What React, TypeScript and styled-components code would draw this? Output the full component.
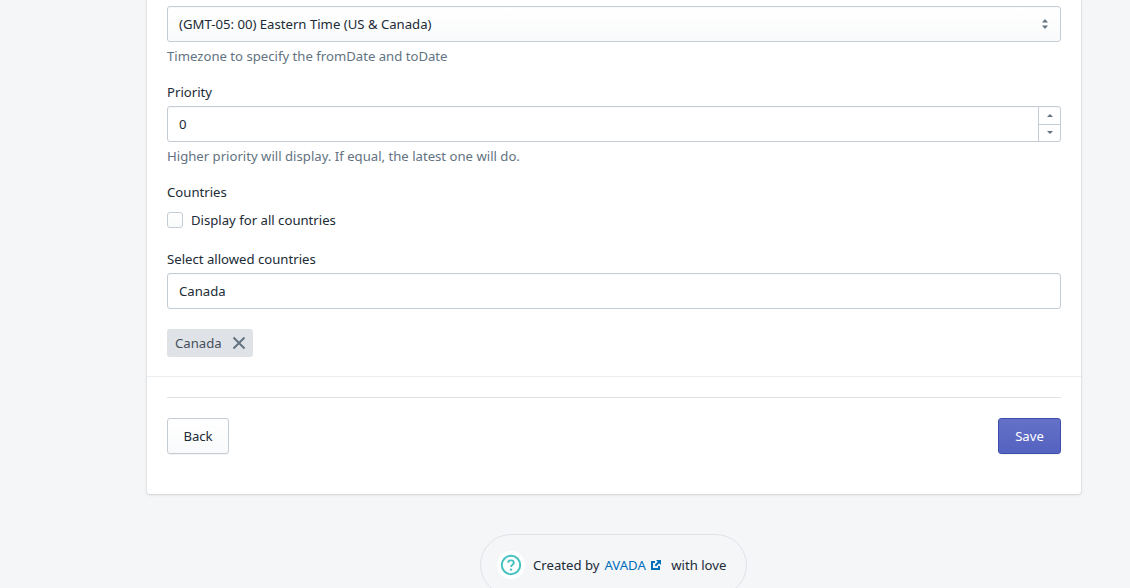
import React from "react";
import styled, { createGlobalStyle } from "styled-components";

const GlobalStyle = createGlobalStyle`
  html, body {
    margin: 0;
    height: 588px;
    overflow: hidden;
    background: #f4f6f8;
    font-family: "Noto Sans", "Open Sans", sans-serif;
    font-size: 13.15px;
    color: #212b36;
  }
  * { box-sizing: border-box; }
`;

const Page = styled.div`
  width: 1130px;
  padding: 0 49px 0 147px;
`;

const Card = styled.div`
  background: #fff;
  border-radius: 0 0 3px 3px;
  box-shadow: 0 0 0 1px rgba(63, 63, 68, 0.05), 0 1px 3px 0 rgba(63, 63, 68, 0.15);
`;

const FormSection = styled.div`
  padding: 6px 20px 19px;
  border-bottom: 1px solid #ebeef0;
`;

const ActionSection = styled.div`
  padding: 20px 20px 40px;
`;

const Field = styled.div<{ $gap?: number }>`
  margin-bottom: ${(p) => p.$gap ?? 0}px;
`;

const Label = styled.div`
  height: 20px;
  line-height: 20px;
  margin-bottom: 4px;
`;

const InputBox = styled.div`
  position: relative;
  height: 36px;
  display: flex;
  align-items: center;
  padding-left: 11px;
  border: 1px solid #c4cdd5;
  border-radius: 3px;
  background: #fff;
  box-shadow: inset 0 1px 0 0 rgba(99, 115, 129, 0.05);
`;

const SelectBox = styled(InputBox)`
  background: linear-gradient(180deg, #fff, #f9fafb);
  justify-content: space-between;
  padding-right: 11px;
`;

const Help = styled.div`
  color: #637381;
  height: 20px;
  line-height: 20px;
  margin-top: 4px;
`;

const Stepper = styled.div`
  position: absolute;
  top: 0;
  right: 0;
  bottom: 0;
  width: 22px;
  display: flex;
  flex-direction: column;
  border-left: 1px solid #c4cdd5;
`;

const StepButton = styled.div<{ $down?: boolean }>`
  flex: 1;
  display: flex;
  align-items: center;
  justify-content: center;
  border-top: ${(p) => (p.$down ? "1px solid #c4cdd5" : "none")};
`;

const CheckRow = styled.div`
  display: flex;
  align-items: center;
  gap: 8px;
  height: 20px;
  margin-top: 8px;
`;

const CheckBox = styled.div`
  width: 16px;
  height: 16px;
  border: 1px solid #c4cdd5;
  border-radius: 3px;
  background: linear-gradient(180deg, #fff, #f9fafb);
`;

const Tag = styled.div`
  display: inline-flex;
  align-items: center;
  height: 28px;
  margin-top: 20px;
  padding: 0 7px 0 8px;
  gap: 10px;
  background: #dfe3e8;
  border-radius: 3px;
  color: #454f5b;
`;

const Divider = styled.hr`
  margin: 0 0 20px;
  border: none;
  border-top: 1px solid #dfe3e8;
`;

const Actions = styled.div`
  display: flex;
  justify-content: space-between;
`;

const Button = styled.div<{ $primary?: boolean }>`
  height: 36px;
  display: flex;
  align-items: center;
  justify-content: center;
  width: ${(p) => (p.$primary ? "63px" : "62px")};
  border-radius: 3px;
  border: 1px solid ${(p) => (p.$primary ? "#3f4eae" : "#c4cdd5")};
  background: ${(p) =>
    p.$primary ? "linear-gradient(180deg, #6371c7, #5563c1)" : "linear-gradient(180deg, #fff, #f9fafb)"};
  color: ${(p) => (p.$primary ? "#fff" : "#212b36")};
  box-shadow: 0 1px 0 0 rgba(22, 29, 37, 0.05);
`;

const Footer = styled.div`
  display: flex;
  justify-content: center;
  margin-top: 40px;
  padding-right: 1px;
`;

const Pill = styled.div`
  display: flex;
  align-items: center;
  width: 267px;
  height: 62px;
  padding: 0 0 0 16px;
  border: 1px solid #dfe3e8;
  border-radius: 31px;
`;

const HelpIcon = styled.div`
  width: 28px;
  height: 28px;
  border-radius: 50%;
  background: #fff;
  display: flex;
  align-items: center;
  justify-content: center;
  margin-right: 8px;
`;

const Link = styled.a`
  color: #006fbb;
  margin: 0 6px 0 5px;
  display: inline-flex;
  align-items: center;
  gap: 4px;
`;

const Caret = ({ up }: { up?: boolean }) => (
  <svg width="8" height="4" viewBox="0 0 8 4" style={{ display: "block" }}>
    <path d={up ? "M1 4 L4 1 L7 4 Z" : "M1 0 L4 3 L7 0 Z"} fill="#637381" />
  </svg>
);

export default function App() {
  return (
    <Page>
      <GlobalStyle />
      <Card>
        <FormSection>
          <Field $gap={16}>
            <SelectBox>
              <span>(GMT-05: 00) Eastern Time (US &amp; Canada)</span>
              <svg width="8" height="12" viewBox="0 0 8 12">
                <path d="M1 4.5 L4 1 L7 4.5 Z M1 7.5 L4 11 L7 7.5 Z" fill="#637381" />
              </svg>
            </SelectBox>
            <Help>Timezone to specify the fromDate and toDate</Help>
          </Field>
          <Field $gap={16}>
            <Label>Priority</Label>
            <InputBox>
              0
              <Stepper>
                <StepButton>
                  <Caret up />
                </StepButton>
                <StepButton $down>
                  <Caret />
                </StepButton>
              </Stepper>
            </InputBox>
            <Help>Higher priority will display. If equal, the latest one will do.</Help>
          </Field>
          <Field $gap={19}>
            <Label>Countries</Label>
            <CheckRow>
              <CheckBox />
              Display for all countries
            </CheckRow>
          </Field>
          <Field>
            <Label>Select allowed countries</Label>
            <InputBox>Canada</InputBox>
          </Field>
          <Tag>
            Canada
            <svg width="14" height="14" viewBox="0 0 14 14">
              <path d="M1.5 1.5 L12.5 12.5 M12.5 1.5 L1.5 12.5" stroke="#637381" strokeWidth="2" />
            </svg>
          </Tag>
        </FormSection>
        <ActionSection>
          <Divider />
          <Actions>
            <Button>Back</Button>
            <Button $primary>Save</Button>
          </Actions>
        </ActionSection>
      </Card>
      <Footer>
        <Pill>
          <HelpIcon>
            <svg width="22" height="22" viewBox="0 0 22 22">
              <circle cx="11" cy="11" r="9.2" fill="none" stroke="#47c1bf" strokeWidth="2" />
              <path d="M8.2 8.8 C8.2 5.6 13.8 5.6 13.8 8.8 C13.8 10.8 11 10.6 11 13" fill="none" stroke="#47c1bf" strokeWidth="1.9" />
              <circle cx="11" cy="15.6" r="1.2" fill="#47c1bf" />
            </svg>
          </HelpIcon>
          Created by
          <Link>
            AVADA
            <svg width="12" height="12" viewBox="0 0 12 12">
              <path d="M1 2 H5 V4 H3 V9 H8 V7 H10 V11 H1 Z M6 1 H11 V6 L9.2 4.2 L6 7.4 L4.6 6 L7.8 2.8 Z" fill="#006fbb" />
            </svg>
          </Link>
          &nbsp;with love
        </Pill>
      </Footer>
    </Page>
  );
}
